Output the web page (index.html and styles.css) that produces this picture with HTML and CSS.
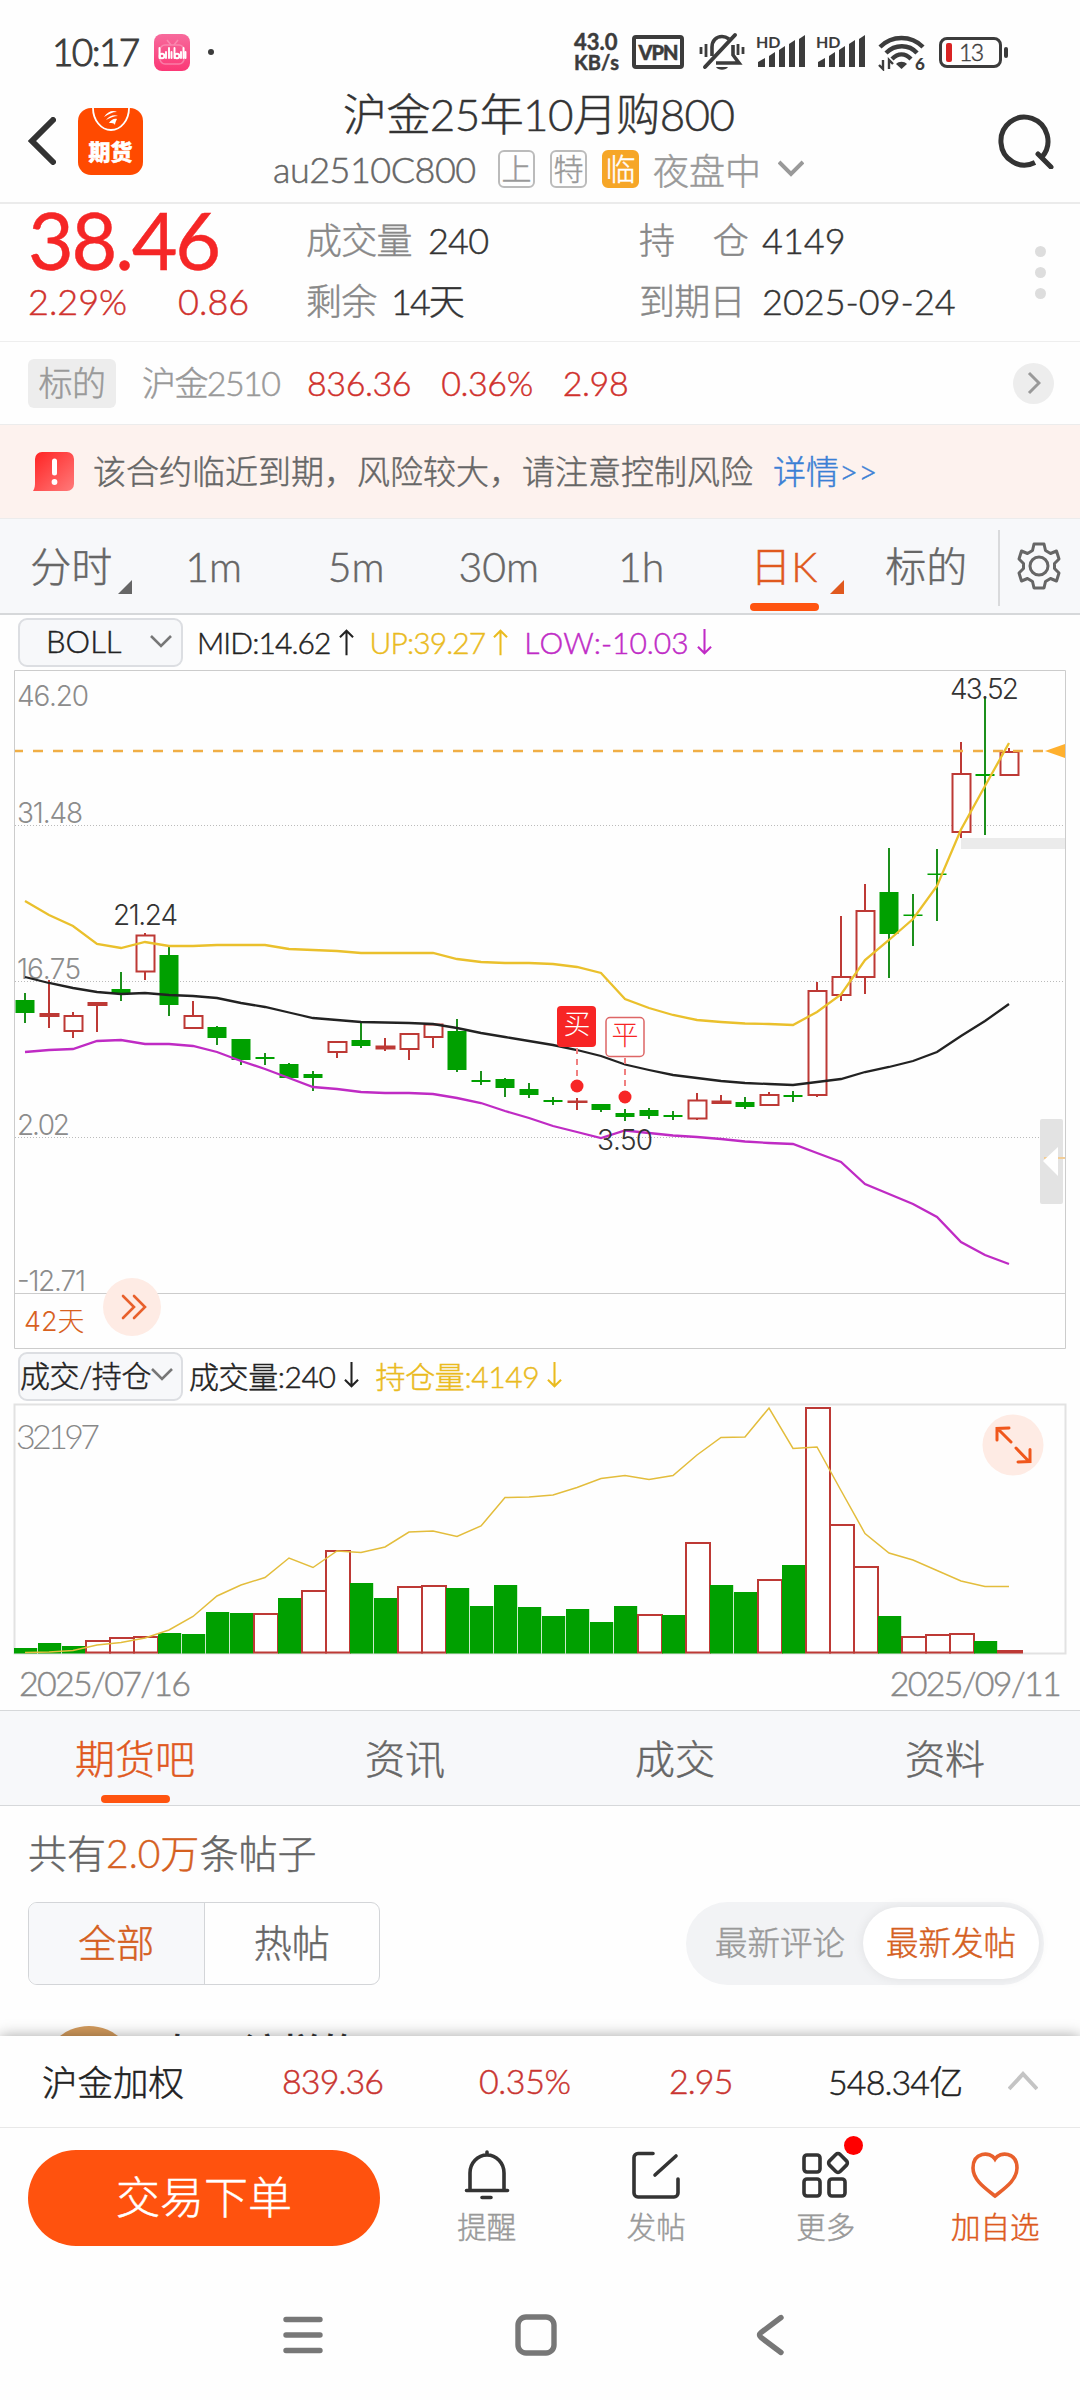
FILE: index.html
```
<!DOCTYPE html>
<html lang="zh-CN">
  <head>
    <meta charset="UTF-8" />
    <meta name="viewport" content="width=device-width, initial-scale=1.0" />
    <title>沪金25年10月购800</title>
    <link rel="stylesheet" href="styles.css">
  </head>
  <body>
    <div class="statusBar">
      <span class="clock">10:17</span>
      <svg class="bili" width="36" height="37" viewBox="0 0 36 37">
        <defs>
          <linearGradient id="pink" x1="0" y1="0" x2="0" y2="1">
            <stop offset="0" stop-color="#f76a9c" />
            <stop offset="1" stop-color="#fb3876" />
          </linearGradient>
        </defs>
        <rect width="36" height="37" rx="8" fill="url(#pink)" />
        <g fill="none" stroke="#fba3c2" stroke-width="1.6" opacity="0.6">
          <rect x="6" y="11" width="24" height="19" rx="5" />
          <path d="M13 6l4 5M24 6l-4 5" />
        </g>
        <g fill="none" stroke="#fff" stroke-width="1.9" stroke-linecap="round">
          <path d="M5.500 14v10M12 18v6M15 14v10M17.500 18v6M20.500 14v10M27 18v6M29.500 14v10M31.500 18v6" />
          <circle cx="8" cy="22" r="2.300" />
          <circle cx="23" cy="22" r="2.300" />
        </g>
      </svg>
      <span class="statusDot"></span>
      <div class="netSpeed"><div>43.0</div><div>KB/s</div></div>
      <div class="vpn">VPN</div>
      <svg class="muted" width="46" height="40" viewBox="0 0 46 40" fill="none" stroke="#3c3c3c" stroke-width="3.600">
        <path d="M13 24v-9c0-6 4-10.500 10-10.500 3 0 5 1 7 2.500M34 13v10l6 8H17" />
        <path d="M6 35L36 3" stroke-width="4" stroke-linecap="round" />
        <path d="M17 35h12c-2 3.500-10 3.500-12 0z" fill="#3c3c3c" stroke="none" />
        <path d="M2 15v7M7 12v13M39 12v11M44 15v7" stroke-width="2.800" />
      </svg>
      <svg class="signal" width="50" height="34" viewBox="0 0 50 34" fill="#3c3c3c">
        <text x="0" y="13" font-size="16">HD</text>
        <path d="M2 32v-5l7-4v9zM13 32V21l6-4v15zM23 32V15l6-4v21zM33 32V9l6-4v27zM43 32V4l6-4v32z" />
      </svg>
      <svg class="signal" width="50" height="34" viewBox="0 0 50 34" fill="#3c3c3c">
        <text x="0" y="13" font-size="16">HD</text>
        <path d="M2 32v-5l7-4v9zM13 32V21l6-4v15zM23 32V15l6-4v21zM33 32V9l6-4v27zM43 32V4l6-4v32z" />
      </svg>
      <svg class="wifi" width="48" height="37" viewBox="0 0 48 37" fill="none" stroke="#3c3c3c" stroke-width="4.400">
        <path d="M2 13c12-12 31-12 43 0M8 19c9-9 23-9 31 0M14 25c6-6 13-6 19 0" />
        <path d="M18 30c3-3 8-3 11 0l-5.500 5z" fill="#3c3c3c" stroke="none" />
        <path d="M5 26v9l-4-4M11 35v-9l4 4" stroke-width="2.400" />
        <text x="37" y="36" font-size="17" stroke="none" fill="#3c3c3c">6</text>
      </svg>
      <div class="battery"><i></i><span>13</span></div>
    </div>

    <header>
      <svg class="back" width="28" height="48" viewBox="0 0 28 48" fill="none" stroke="#333" stroke-width="6" stroke-linecap="round">
        <path d="M25 3L4 24l21 21" />
      </svg>
      <div class="appIcon">
        <svg width="65" height="26" viewBox="0 0 65 26">
          <path d="M15 0c0 12 8 22 18 22s18-10 18-22" fill="none" stroke="#fff" stroke-width="1.800" />
          <path d="M26 9c4-6 9-7 13-5-5 0-8 2-13 5zM28 12c3-4 8-6 12-4-4 0-8 2-12 4zM31 15c2-3 5-5 8-4-1 2-2 4-2 6-1-2-3-2-6-2z" fill="#fff" />
        </svg>
        <span>期货</span>
      </div>
      <div class="titles">
        <h1>沪金25年10月购800</h1>
        <div class="subTitle">
          <span class="code">au2510C800</span>
          <span class="tag">上</span>
          <span class="tag">特</span>
          <span class="tag tagOrange">临</span>
          <span class="session">夜盘中</span>
          <svg width="26" height="18" viewBox="0 0 26 18" fill="none" stroke="#999" stroke-width="4">
            <path d="M1 2l12 12L25 2" />
          </svg>
        </div>
      </div>
      <svg class="search" width="56" height="56" viewBox="0 0 56 56" fill="none" stroke="#333" stroke-width="5">
        <path d="M37 49.500A23.500 24 0 1 1 44 44" />
        <path d="M40 41L53 54" stroke-linecap="round" />
      </svg>
    </header>

    <section class="quote">
      <div class="priceBox">
        <div class="price">38.46</div>
        <div class="change"><span>2.29%</span><span>0.86</span></div>
      </div>
      <dl class="facts">
        <dt>成交量</dt><dd>240</dd>
        <dt>剩余</dt><dd>14天</dd>
      </dl>
      <dl class="facts factsWide">
        <dt class="spread"><span>持</span><span>仓</span></dt><dd>4149</dd>
        <dt>到期日</dt><dd>2025-09-24</dd>
      </dl>
      <div class="dots"><i></i><i></i><i></i></div>
    </section>

    <section class="underlying">
      <span class="underTag">标的</span>
      <span class="underName">沪金2510</span>
      <span class="red">836.36</span>
      <span class="red">0.36%</span>
      <span class="red">2.98</span>
      <span class="goBtn">
        <svg width="14" height="24" viewBox="0 0 14 24" fill="none" stroke="#999" stroke-width="3"><path d="M2 2l10 10L2 22" /></svg>
      </span>
    </section>

    <section class="notice">
      <svg width="42" height="41" viewBox="0 0 42 41">
        <defs>
          <linearGradient id="warn" x1="0" y1="0" x2="1" y2="1">
            <stop offset="0" stop-color="#ff2222" />
            <stop offset="1" stop-color="#ff7a7a" />
          </linearGradient>
        </defs>
        <path d="M9 1h25a7 7 0 0 1 7 7v25a7 7 0 0 1-7 7H0c2-3 2-6 2-9V8a7 7 0 0 1 7-7z" fill="url(#warn)" />
        <path d="M21.500 10v12" stroke="#fff" stroke-width="5" stroke-linecap="round" />
        <circle cx="21.500" cy="31" r="2.900" fill="#fff" />
      </svg>
      <span>该合约临近到期，风险较大，请注意控制风险</span>
      <a href="#">详情&gt;&gt;</a>
    </section>

    <nav class="periods">
      <div class="period more">分时</div>
      <div class="period">1m</div>
      <div class="period">5m</div>
      <div class="period">30m</div>
      <div class="period">1h</div>
      <div class="period more active">日K</div>
      <div class="period">标的</div>
      <div class="settings">
        <svg width="44" height="48" viewBox="-22 -24 44 48" fill="none" stroke="#666" stroke-width="3" stroke-linejoin="round">
          <path d="M-5-22H5l1.500 6.500 5 3 6-2.500 2.500 8-4.500 4.500v5l4.500 4.500-2.500 8-6-2.500-5 3L5 22H-5l-1.500-6.500-5-3-6 2.500-2.500-8 4.500-4.500v-5l-4.500-4.500 2.500-8 6 2.500 5-3z" />
          <circle r="9" />
        </svg>
      </div>
    </nav>

    <div class="indicator">
      <div class="select">BOLL
        <svg width="22" height="13" viewBox="0 0 22 13"><path d="M1 1l10 10L21 1" /></svg>
      </div>
      <span class="mid tight">MID:14.62<svg class="arrow" viewBox="0 0 16 28"><path d="M8 28V2M1 9l7-7 7 7" /></svg></span>
      <span class="up tight">UP:39.27<svg class="arrow" viewBox="0 0 16 28"><path d="M8 28V2M1 9l7-7 7 7" /></svg></span>
      <span class="low">LOW:-10.03<svg class="arrow" viewBox="0 0 16 28"><path d="M8 0v26M1 19l7 7 7-7" /></svg></span>
    </div>

    <svg class="chart" id="kline" width="1080" height="681" viewBox="0 669 1080 681">
      <g fill="none" stroke="#ccc">
        <path d="M14.500 670.500H1065.500V1348.500H14.500zM14.500 1293.500H1065.500" />
        <path d="M15 825.500H1065M15 981.500H1065M15 1137.500H1065" stroke-dasharray="1 2" stroke="#bbb" />
      </g>
      <g class="axis">
        <text x="17" y="706" textLength="72">46.20</text>
        <text x="17" y="823" textLength="66">31.48</text>
        <text x="17" y="979" textLength="64">16.75</text>
        <text x="17" y="1135" textLength="53">2.02</text>
        <text x="17" y="1291" textLength="69">-12.71</text>
      </g>
      <rect x="961" y="838" width="104" height="11" fill="#ebebeb" />
      <g id="candles"></g>
      <path d="M15 751H1045" stroke="#f0ae45" stroke-width="2.400" stroke-dasharray="10 10" stroke-dashoffset="2" />
      <path d="M1045 751L1065 744V758z" fill="#ffb02e" />
      <g id="lines" fill="none" stroke-width="2.300"></g>
      <g class="peak">
        <text x="113" y="925" textLength="65">21.24</text>
        <text x="950" y="699" textLength="69">43.52</text>
        <text x="597" y="1150" textLength="56">3.50</text>
      </g>
      <g fill="#f72525">
        <path d="M577 1048v32M625 1058v30" stroke="#f08080" stroke-width="2" stroke-dasharray="6 5" />
        <circle cx="577" cy="1086" r="6.500" />
        <circle cx="625" cy="1097" r="6.500" />
        <rect x="557" y="1006" width="39" height="41" rx="4" />
        <rect x="606" y="1017.500" width="38" height="39" rx="4" fill="#fff" stroke="#d66" stroke-width="1.500" />
        <text x="563.500" y="1034" font-size="27" fill="#fff">买</text>
        <text x="611.500" y="1045" font-size="27">平</text>
      </g>
      <rect x="1040" y="1119" width="23" height="85" rx="2" fill="#e3e3e3" />
      <path d="M1044 1158H1065" stroke="#f2cd97" stroke-width="2" />
      <path d="M1043 1161L1058 1147V1176z" fill="#fff" />
      <text class="days" x="24" y="1331">42天</text>
      <circle cx="132" cy="1307" r="29" fill="#feebe4" />
      <path d="M123 1296l11 11-11 11M134 1296l11 11-11 11" fill="none" stroke="#e8602c" stroke-width="2.600" stroke-linecap="round" />
    </svg>

    <div class="indicator volumeHead">
      <div class="select selectTight">成交/持仓
        <svg width="22" height="13" viewBox="0 0 22 13"><path d="M1 1l10 10L21 1" /></svg>
      </div>
      <span class="mid">成交量:240<svg class="arrow" viewBox="0 0 16 28"><path d="M8 0v26M1 19l7 7 7-7" /></svg></span>
      <span class="up">持仓量:4149<svg class="arrow" viewBox="0 0 16 28"><path d="M8 0v26M1 19l7 7 7-7" /></svg></span>
    </div>

    <svg class="chart" width="1080" height="252" viewBox="0 1403 1080 252">
      <path d="M14.500 1404.500H1065.500V1653.500H14.500z" fill="none" stroke="#e2e2e2" stroke-width="2" />
      <text x="16" y="1449" font-size="34" textLength="84" fill="#888">32197</text>
      <g id="bars"></g>
      <g id="interest" fill="none" stroke-width="1.500"></g>
      <circle cx="1013" cy="1445" r="30.500" fill="#feebe4" />
      <path d="M1011 1442L998 1429M997 1440v-11.500l12-.5M1016 1448l13 13.500M1018 1462l12-.5v-12" fill="none" stroke="#f0571c" stroke-width="3" stroke-linecap="round" />
    </svg>
    <div class="dates"><span>2025/07/16</span><span>2025/09/11</span></div>

    <nav class="sections">
      <div class="active">期货吧</div>
      <div>资讯</div>
      <div>成交</div>
      <div>资料</div>
    </nav>

    <section class="posts">
      <div class="count">共有<b>2.0万</b>条帖子</div>
      <div class="filters">
        <div class="segment"><span class="on">全部</span><span>热帖</span></div>
        <div class="sort"><span>最新评论</span><span class="on">最新发帖</span></div>
      </div>
      <div class="post"><i class="avatar"></i><span>如日流样的</span></div>
    </section>

    <footer>
      <div class="ticker">
        <span class="tickName">沪金加权</span>
        <span class="tickPrice">839.36</span>
        <span class="tickRate">0.35%</span>
        <span class="tickDiff">2.95</span>
        <span class="tickAmount">548.34亿</span>
        <svg width="30" height="20" viewBox="0 0 30 20" fill="none" stroke="#c4c4c4" stroke-width="4"><path d="M1 18L15 3l14 15" /></svg>
      </div>
      <div class="actions">
        <button>交易下单</button>
        <div class="action">
          <svg width="48" height="50" viewBox="0 0 48 50">
            <path d="M7 40V23a17 18 0 0 1 34 0v17M3.500 40.500h41M24 5V2M19 47.500h9" />
          </svg>
          提醒
        </div>
        <div class="action">
          <svg width="48" height="50" viewBox="0 0 48 50">
            <path d="M21 3.500H6a4 4 0 0 0-4 4V43a4 4 0 0 0 4 4h36a4 4 0 0 0 4-4V29M23 25L44 6" />
          </svg>
          发帖
        </div>
        <div class="action">
          <svg width="48" height="50" viewBox="0 0 48 50">
            <rect x="2" y="5" width="16" height="17" rx="3" />
            <rect x="2" y="29" width="16" height="17" rx="3" />
            <rect x="27" y="29" width="16" height="17" rx="3" />
            <rect x="28.500" y="5.500" width="15" height="15" rx="3" transform="rotate(45 36 13)" />
          </svg>
          更多
          <i class="badge"></i>
        </div>
        <div class="action fav">
          <svg width="48" height="50" viewBox="0 0 48 50">
            <path d="M24 9C19 1 2 2 2 18c0 12 12 20 22 28 10-8 22-16 22-28C46 2 29 1 24 9z" />
          </svg>
          加自选
        </div>
      </div>
      <div class="sysNav">
        <svg width="40" height="44" viewBox="0 0 40 44"><path d="M3 6.500h34M3 22h34M3 37.500h34" /></svg>
        <svg width="44" height="44" viewBox="0 0 44 44"><rect x="4" y="4" width="36" height="36" rx="8" /></svg>
        <svg width="30" height="44" viewBox="0 0 30 44"><path d="M25 4.500L5 19.500q-3 2.500 0 5L25 39.500" /></svg>
      </div>
    </footer>

    <script>
      const STEP = 24
      const RED = '#bd3935'
      const GREEN = '#00a000'

      // colour, high, body top, body bottom, low
      const candles = [
        ['g', 993, 1000, 1013, 1023], ['r', 980, 1014, 1016, 1028], ['r', 1012, 1016, 1031, 1038],
        ['r', 1002, 1003, 1005, 1032], ['g', 972, 989, 994, 1001], ['r', 933, 935.5, 971.5, 980],
        ['g', 947, 955, 1005, 1016], ['r', 1001, 1016, 1028, 1028], ['g', 1026, 1027, 1038, 1045],
        ['g', 1039, 1039, 1060, 1065], ['g', 1053, 1057, 1059, 1065], ['g', 1063, 1064, 1078, 1078],
        ['g', 1071, 1074, 1078, 1091], ['r', 1041, 1042, 1052, 1058], ['g', 1022, 1040, 1046, 1048],
        ['r', 1038, 1046.5, 1048.5, 1051], ['r', 1033, 1034, 1049, 1060], ['r', 1023, 1024.5, 1037, 1048],
        ['g', 1019, 1031, 1070, 1072], ['g', 1071, 1080, 1082, 1085], ['g', 1078, 1079, 1088, 1097],
        ['g', 1083, 1089, 1095, 1098], ['g', 1097, 1100, 1102, 1105], ['r', 1098, 1101.5, 1102, 1110],
        ['g', 1104, 1104, 1110, 1112], ['g', 1109, 1113, 1117, 1121], ['g', 1108, 1110, 1116, 1119],
        ['g', 1111, 1115, 1117, 1120], ['r', 1093, 1100.5, 1118.5, 1120], ['r', 1095, 1101.5, 1103, 1103],
        ['g', 1097, 1102, 1107, 1109], ['r', 1092, 1095, 1105, 1105], ['g', 1091, 1095, 1097, 1102],
        ['r', 982, 991, 1095, 1097], ['r', 916, 977, 995, 1001], ['r', 884, 911, 977, 994],
        ['g', 848, 892, 934, 978], ['g', 894, 914.5, 916, 946], ['g', 849, 873.5, 875, 921],
        ['r', 742, 774, 832, 838], ['g', 697, 774, 776, 835], ['r', 748, 752, 775, 775],
      ]
      const up = [901, 915, 926, 944, 948, 942, 946, 946, 945, 945, 945, 949, 950, 951, 953, 953, 953, 953, 959, 962, 963, 963, 964, 967, 973, 999, 1008, 1015, 1020, 1022, 1023.5, 1024, 1025, 1012, 994.5, 960, 940, 919, 886, 829.5, 786, 743]
      const mid = [977, 983, 988, 992, 994, 993, 995, 996, 998, 1003, 1007, 1012.5, 1018, 1020, 1022, 1022.5, 1023, 1024, 1028, 1033, 1037, 1041, 1045, 1050, 1056, 1064.5, 1070, 1075, 1078, 1081, 1083, 1084, 1085, 1082, 1079, 1072, 1067, 1061, 1052, 1036, 1021, 1004]
      const low = [1052, 1050, 1049, 1041, 1040, 1044, 1044, 1046, 1052, 1061, 1069, 1078, 1087, 1089, 1092, 1093, 1093, 1094, 1098, 1103, 1111, 1118, 1126, 1132, 1138, 1130.5, 1133, 1135.5, 1137, 1139, 1141.5, 1143, 1144, 1153, 1162, 1184, 1194, 1204, 1217, 1242, 1255, 1264]

      const volumes = [1648, 1643, 1646, 1641, 1638, 1637, 1633, 1634, 1612, 1613, 1614, 1598, 1591, 1551, 1583, 1598, 1587, 1586, 1588, 1606, 1585, 1607, 1616, 1609, 1622, 1606, 1615, 1615, 1543, 1585, 1592, 1580, 1565, 1408, 1525, 1567, 1616, 1637, 1635, 1634, 1641, 1651]
      const volumeRed = [3, 4, 5, 10, 12, 13, 16, 17, 26, 28, 31, 33, 34, 35, 37, 38, 39, 41]
      const interest = [1652.5, 1652, 1650.5, 1645, 1642.5, 1638, 1630, 1616.5, 1596, 1585, 1577.5, 1558, 1567.5, 1551, 1552.5, 1547, 1532, 1531, 1536.5, 1526, 1497.5, 1497, 1495, 1487.5, 1478.5, 1475.5, 1479.5, 1475.5, 1455, 1437.5, 1437, 1408, 1448.5, 1447, 1490.5, 1533.5, 1553, 1560, 1570.5, 1581, 1586.5, 1586.5]

      const line = (points, color) =>
        `<polyline stroke="${color}" points="${points.map((y, i) => `${25 + i * STEP},${y}`).join(' ')}" />`

      document.querySelector('#candles').innerHTML = candles
        .map(([c, high, top, bottom, lowest], i) => {
          const x = 25 + i * STEP
          if (c === 'g') {
            return `<path d="M${x} ${high}V${lowest}" stroke="#1c8f1c" stroke-width="2" />
              <rect x="${x - 9.5}" y="${top}" width="19" height="${bottom - top}" fill="${GREEN}" />`
          }
          return `<path d="M${x} ${high}V${top}M${x} ${bottom}V${lowest}" stroke="${RED}" stroke-width="2" />
            <rect x="${x - 8.5}" y="${top}" width="18" height="${bottom - top}" fill="#fff" stroke="${RED}" stroke-width="2" />`
        })
        .join('')

      document.querySelector('#lines').innerHTML =
        line(up, '#eac02c') + line(mid, '#222') + line(low, '#bf2bc4')

      document.querySelector('#bars').innerHTML = volumes
        .map((y, i) => {
          const x = 14 + i * STEP
          return volumeRed.includes(i)
            ? `<rect x="${x}" y="${y}" width="24" height="${1652.5 - y}" fill="#fff" stroke="${RED}" stroke-width="2" />`
            : `<rect x="${x}" y="${y}" width="23.2" height="${1653.5 - y}" fill="${GREEN}" />`
        })
        .join('')
      document.querySelector('#interest').innerHTML = line(interest, '#e3bd3c')
    </script>
  </body>
</html>
```
FILE: styles.css
```
* {
  box-sizing: border-box;
}

body {
  margin: 0;
  width: 1080px;
  height: 2400px;
  overflow: hidden;
  background: #fefefe;
  font-family: Lato, 'Noto Sans CJK SC', sans-serif;
  font-weight: 300;
  font-kerning: none;
  -webkit-text-stroke: 0.45px;
  color: #333;
  display: flex;
  flex-direction: column;
}

svg {
  display: block;
  flex: none;
}

svg text {
  -webkit-text-stroke: 0;
}

span,
a,
dt,
dd,
.period {
  white-space: nowrap;
}

.red {
  color: #d0312d;
}

/* status bar */
.statusBar {
  display: flex;
  align-items: center;
  height: 92px;
  padding: 12px 0 0 52px;
  color: #3c3c3c;
}

.clock {
  width: 102px;
  padding-bottom: 1px;
  font-size: 37px;
  letter-spacing: -1.6px;
  -webkit-text-stroke: 1px;
}

.statusDot {
  width: 6px;
  height: 6px;
  margin-left: 18px;
  border-radius: 50%;
  background: #3c3c3c;
}

.netSpeed {
  width: 58px;
  margin-left: 360px;
  font-size: 22px;
  font-weight: 700;
  line-height: 20px;
}

.netSpeed div + div {
  font-size: 20px;
}

.vpn {
  width: 52px;
  height: 34px;
  border: 4px solid #3c3c3c;
  border-radius: 4px;
  font-size: 20px;
  line-height: 26px;
  font-weight: 900;
  letter-spacing: -1px;
  text-align: center;
}

.muted {
  margin-left: 15px;
}

.signal {
  margin-left: 11px;
  font-weight: 700;
}

.signal + .signal {
  margin-left: 10px;
}

.wifi {
  margin-left: 12px;
  font-weight: 900;
}

.battery {
  position: relative;
  display: flex;
  align-items: center;
  width: 63px;
  height: 31px;
  margin-left: 13px;
  padding-left: 4px;
  border: 3px solid #3c3c3c;
  border-radius: 8px;
}

.battery::after {
  content: '';
  position: absolute;
  left: 62px;
  top: 7px;
  width: 4px;
  height: 11px;
  border-radius: 2px;
  background: #3c3c3c;
}

.battery i {
  width: 6px;
  height: 19px;
  border-radius: 2px;
  background: #d92323;
}

.battery span {
  margin-left: 7px;
  font-size: 23px;
  letter-spacing: -1.5px;
}

/* header */
header {
  display: flex;
  height: 112px;
  border-bottom: 2px solid #ebebeb;
}

.back {
  margin: 25px 0 0 28px;
}

.appIcon {
  width: 65px;
  height: 67px;
  margin: 16px 0 0 22px;
  border-radius: 13px;
  background: #ff4a00;
  overflow: hidden;
}

.appIcon span {
  display: block;
  text-align: center;
  color: #fff;
  font-size: 22px;
  font-weight: 900;
  line-height: 36px;
}

.titles {
  flex: 1;
  padding-left: 130px;
}

h1 {
  margin: 0;
  padding-left: 70px;
  font-size: 44px;
  font-weight: 300;
  line-height: 44px;
  letter-spacing: -0.6px;
}

.subTitle {
  display: flex;
  align-items: center;
  height: 66px;
  font-size: 36px;
  color: #999;
}

.code {
  width: 225px;
  letter-spacing: -0.5px;
  color: #666;
}

.tag {
  width: 37px;
  height: 38px;
  margin-right: 15px;
  border: 2px solid #bbb;
  border-radius: 6px;
  font-size: 30px;
  line-height: 33px;
  text-align: center;
}

.tagOrange {
  border-color: #f6a627;
  background: #f6a627;
  color: #fff;
}

.session {
  width: 125px;
  margin-left: -1px;
}

.search {
  margin: 21px 26px 0 0;
}

/* quote */
.quote {
  display: flex;
  height: 138px;
  padding-left: 28px;
  border-bottom: 1px solid #eee;
}

.priceBox {
  width: 278px;
}

.price {
  font-size: 79px;
  font-weight: 400;
  line-height: 71px;
  letter-spacing: -2.2px;
  color: #f52626;
}

.change {
  display: flex;
  gap: 51px;
  font-size: 36px;
  line-height: 52px;
  color: #d0312d;
}

.facts {
  display: grid;
  grid-template-columns: 122px 211px;
  grid-template-rows: 61px 61px;
  margin: 6px 0 0;
  font-size: 36px;
  line-height: 61px;
  letter-spacing: -0.8px;
}

.facts dt {
  color: #888;
}

.facts dd {
  margin: 0;
}

.facts:not(.factsWide) dd:last-child {
  margin-left: -37px;
  letter-spacing: -2px;
}

.factsWide dd {
  padding-left: 1px;
  letter-spacing: 0;
}

.spread {
  display: flex;
  justify-content: space-between;
  width: 109px;
}

.dots {
  display: flex;
  flex-direction: column;
  gap: 10px;
  margin: 42px 0 0 63px;
}

.dots i {
  width: 11px;
  height: 11px;
  border-radius: 50%;
  background: #ddd;
}

/* underlying contract */
.underlying {
  display: flex;
  align-items: center;
  height: 82px;
  padding: 0 26px 0 28px;
  font-size: 34px;
  line-height: 48px;
  letter-spacing: -0.4px;
}

.underTag {
  width: 88px;
  height: 49px;
  margin-right: 26px;
  border-radius: 6px;
  background: #ededed;
  color: #999;
  text-align: center;
}

.underName {
  width: 165px;
  letter-spacing: -1.6px;
  color: #999;
}

.underlying .red {
  margin-right: 30px;
}

.goBtn {
  display: flex;
  align-items: center;
  justify-content: center;
  width: 41px;
  height: 41px;
  margin-left: auto;
  border-radius: 50%;
  background: #ededed;
}

/* risk notice */
.notice {
  display: flex;
  align-items: center;
  height: 94px;
  padding-left: 33px;
  border-top: 1px solid #ececec;
  background: #fdf2ee;
  font-size: 33px;
  color: #666;
}

.notice span,
.notice a {
  padding-bottom: 4px;
}

.notice span {
  width: 680px;
  margin-left: 18px;
}

.notice a {
  color: #3a7fd5;
  text-decoration: none;
}

/* period tabs */
.periods {
  display: flex;
  height: 97px;
  border-top: 1px solid #ececec;
  border-bottom: 2px solid #d6d8da;
  background: #f7f8fa;
  font-size: 41px;
  line-height: 95px;
  color: #666;
}

.period {
  position: relative;
  width: 142.5px;
  text-align: center;
}

.more::after {
  content: '';
  position: absolute;
  right: 11px;
  bottom: 19px;
  border-left: 14px solid transparent;
  border-bottom: 14px solid currentColor;
}

.active {
  color: #e0591e;
}

.period.active::before,
.sections .active::before {
  content: '';
  position: absolute;
  left: 50%;
  bottom: 2px;
  width: 69px;
  height: 8px;
  margin-left: -34px;
  border-radius: 4px;
  background: #ff5410;
}

.settings {
  display: flex;
  align-items: center;
  justify-content: center;
  width: 81px;
  height: 76px;
  margin-top: 11px;
  border-left: 2px solid #d9dadc;
}

.settings svg {
  margin-top: -4px;
}

/* indicator rows */
.indicator {
  display: flex;
  align-items: center;
  height: 54px;
  padding-left: 18px;
  font-size: 30px;
}

.select {
  display: flex;
  align-items: center;
  justify-content: space-between;
  width: 165px;
  height: 49px;
  margin-right: 14px;
  padding: 0 9px 2px 26px;
  border: 2px solid #dcdee2;
  border-radius: 9px;
  background: #f7f8fa;
  color: #222;
  font-size: 31px;
  white-space: nowrap;
}

.select svg {
  fill: none;
  stroke: #777;
  stroke-width: 2.6;
}

.selectTight {
  margin-right: 6px;
  padding: 0 9px 5px 0;
  font-size: 30px;
  letter-spacing: -0.4px;
}

.indicator span {
  display: flex;
  align-items: center;
  margin-right: 17px;
}

.indicator .tight {
  margin-right: 16px;
  letter-spacing: -0.9px;
}

.volumeHead span {
  padding-bottom: 3px;
  letter-spacing: -0.4px;
}

.arrow {
  width: 15px;
  height: 28px;
  margin-left: 8px;
  fill: none;
  stroke: currentColor;
  stroke-width: 2.2;
}

.mid {
  color: #222;
}

.up {
  color: #eabb1f;
}

.low {
  color: #c02bc6;
}

.axis {
  font-family: Inter, sans-serif;
  font-size: 28px;
  fill: #8c8c8c;
}

.peak {
  font-family: Inter, sans-serif;
  font-size: 28px;
  fill: #333;
}

.days {
  font-family: Inter, 'Noto Sans CJK SC', sans-serif;
  font-size: 27px;
  fill: #d8611f;
}

.volumeHead {
  height: 53px;
}

.dates {
  display: flex;
  justify-content: space-between;
  height: 55px;
  padding: 0 20px 0 19px;
  font-size: 34px;
  line-height: 55px;
  letter-spacing: -1.7px;
  color: #888;
}

/* section tabs */
.sections {
  display: flex;
  height: 96px;
  border-top: 1px solid #d6d8da;
  border-bottom: 1px solid #d6d8da;
  background: #f7f8fa;
  font-size: 40px;
  line-height: 96px;
  color: #666;
}

.sections div {
  position: relative;
  flex: 1;
  text-align: center;
}

.sections .active {
  color: #e0591e;
}

/* posts */
.posts {
  height: 230px;
  overflow: hidden;
  padding: 0 28px;
}

.count {
  height: 96px;
  font-size: 39px;
  line-height: 95px;
  color: #666;
}

.count b {
  font-weight: 300;
  color: #d5601f;
}

.filters {
  display: flex;
  justify-content: space-between;
}

.segment {
  display: flex;
  width: 352px;
  height: 83px;
  border: 1px solid #d3d5d8;
  border-radius: 9px;
  overflow: hidden;
  font-size: 38px;
  line-height: 79px;
  color: #666;
}

.segment span {
  flex: 1;
  text-align: center;
}

.segment .on {
  border-right: 1px solid #d3d5d8;
  background: #f7f8fa;
  color: #d5601f;
}

.sort {
  display: flex;
  width: 358px;
  height: 83px;
  margin-right: 8px;
  padding: 5px;
  border-radius: 42px;
  background: #f2f3f5;
  font-size: 32.5px;
  line-height: 72px;
  color: #999;
}

.sort span {
  width: 172px;
  padding-left: 24px;
}

.sort .on {
  width: 176px;
  height: 72px;
  padding: 0;
  border-radius: 36px;
  background: #fff;
  box-shadow: 0 0 12px rgba(0, 0, 0, 0.08);
  color: #d5601f;
  text-align: center;
}

.post {
  display: flex;
  margin-top: 41px;
  padding-left: 14px;
}

.avatar {
  width: 94px;
  height: 94px;
  border-radius: 50%;
  background: #d29a5c;
}

.post span {
  margin: 3px 0 0 32px;
  font-size: 38px;
  line-height: 44px;
  font-weight: 500;
}

/* bottom bar */
footer {
  position: relative;
  flex: 1;
  background: #fefefe;
  box-shadow: 0 0 14px rgba(0, 0, 0, 0.35);
}

.ticker {
  display: flex;
  align-items: center;
  height: 92px;
  padding: 0 0 2px 42px;
  border-bottom: 1px solid #e8e8e8;
  font-size: 34px;
  letter-spacing: -0.9px;
  color: #c93430;
}

.tickName {
  width: 240px;
  font-size: 35.5px;
  letter-spacing: 0;
  color: #222;
}

.tickPrice {
  width: 197px;
}

.tickRate {
  width: 190px;
  letter-spacing: -0.4px;
}

.tickDiff {
  width: 159px;
}

.tickAmount {
  width: 180px;
  color: #222;
}

.actions {
  display: flex;
  height: 145px;
  padding: 22px 0 0 28px;
}

button {
  width: 352px;
  height: 96px;
  margin-right: 22px;
  padding: 0 0 6px;
  border: 0;
  border-radius: 48px;
  background: #ff520e;
  color: #fff;
  font: inherit;
  font-size: 44px;
}

.action {
  position: relative;
  display: flex;
  flex-direction: column;
  align-items: center;
  width: 169.5px;
  font-size: 29.5px;
  line-height: 54px;
  color: #999;
}

.action svg {
  fill: none;
  stroke: #333;
  stroke-width: 3.6;
  stroke-linecap: round;
}

.fav {
  color: #dd5a20;
}

.fav svg {
  stroke: #e8602c;
}

.badge {
  position: absolute;
  left: 103px;
  top: -14px;
  width: 19px;
  height: 19px;
  border-radius: 50%;
  background: #f00;
}

.sysNav {
  display: flex;
  padding: 40px 0 0 283px;
}

.sysNav svg {
  margin-right: 191px;
  fill: none;
  stroke: #777;
  stroke-width: 5.4;
  stroke-linecap: round;
}

.sysNav svg + svg {
  margin-right: 198px;
}
```
